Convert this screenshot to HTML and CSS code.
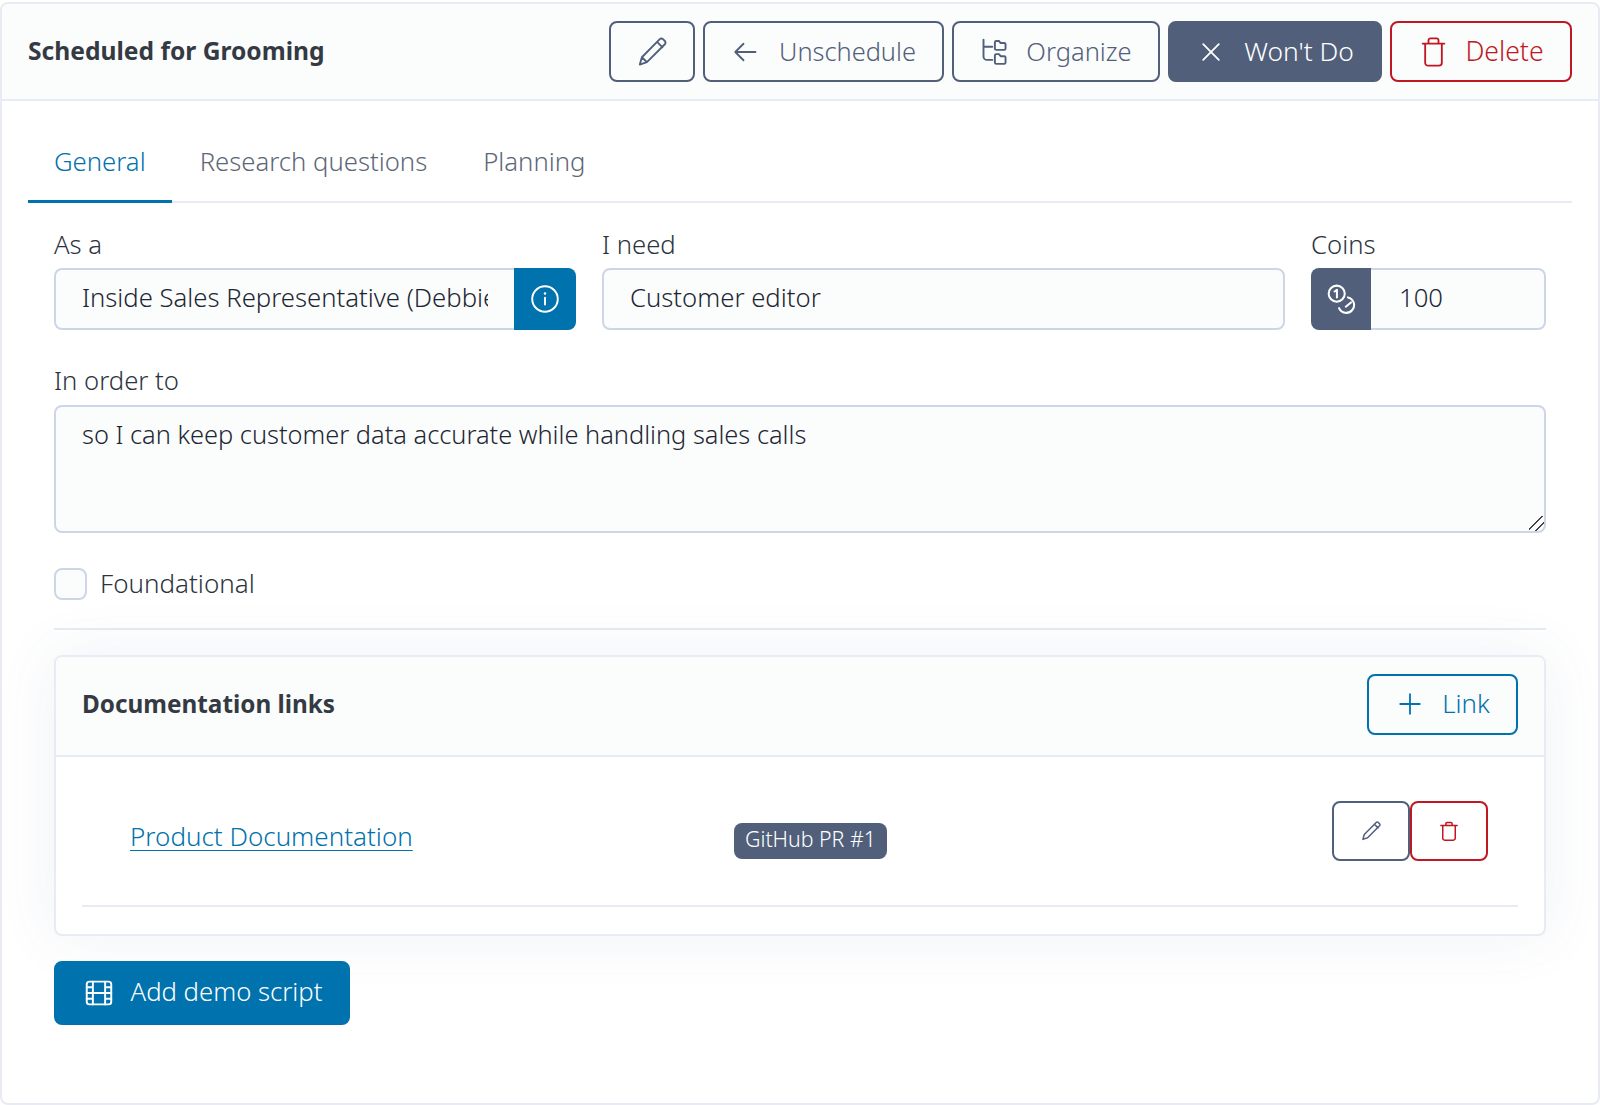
FILE: index.html
```html
<!DOCTYPE html>
<html lang="en">
<head>
<meta charset="utf-8">
<title>Scheduled for Grooming</title>
<link rel="stylesheet" href="styles.css">
</head>
<body>
<main class="panel">
  <header class="panel-head">
    <h1 class="panel-title">Scheduled for Grooming</h1>
    <div class="actions">
      <button class="btn btn-outline btn-icon-only" type="button">
        <svg class="ico ico-pencil" viewBox="0 0 16 16"><path d="M12.150 1.150a1.200 1.200 0 0 1 1.700 0l1 1a1.200 1.200 0 0 1 0 1.700L5.300 13.400 1.500 14.700l1.100-3.900zM10.700 2.600l2.900 2.900M2.600 10.800l2.700 2.600"/></svg>
      </button>
      <button class="btn btn-outline btn-unschedule" type="button">
        <svg class="ico" viewBox="0 0 16 16"><path d="M15 8H1.500M7 2.500 1.500 8 7 13.500"/></svg>
        <span>Unschedule</span>
      </button>
      <button class="btn btn-outline btn-organize" type="button">
        <svg class="ico ico-lg" viewBox="0 0 16 16"><path d="M2 1v9.500A2 2 0 0 0 4 12.500h3M2 5h5M8.500 2.500a.8.800 0 0 1 .8-.8h1.500l1 1.200h2a.8.800 0 0 1 .8.800V6a.8.800 0 0 1-.8.800H9.300a.8.800 0 0 1-.8-.8zM8.500 10a.8.800 0 0 1 .8-.8h1.500l1 1.200h2a.8.800 0 0 1 .8.800V14a.8.800 0 0 1-.8.800H9.300a.8.800 0 0 1-.8-.8z"/></svg>
        <span>Organize</span>
      </button>
      <button class="btn btn-slate btn-wont" type="button">
        <svg class="ico" viewBox="0 0 16 16"><path d="M2.800 2.800l10.400 10.400M13.200 2.800 2.800 13.200"/></svg>
        <span>Won't Do</span>
      </button>
      <button class="btn btn-danger btn-delete" type="button">
        <svg class="ico ico-trash" viewBox="0 0 16 18"><path d="M1.500 4h13M5 4V2a1.200 1.200 0 0 1 1.200-1.200h3.600A1.200 1.200 0 0 1 11 2v2M3 4v11.500A1.700 1.700 0 0 0 4.700 17.200h6.600a1.700 1.700 0 0 0 1.700-1.700V4"/></svg>
        <span>Delete</span>
      </button>
    </div>
  </header>

  <div class="panel-body">
    <nav class="tabs">
      <a class="tab tab-active">General</a>
      <a class="tab">Research questions</a>
      <a class="tab">Planning</a>
    </nav>

    <form class="form">
      <div class="row-top">
        <div class="field field-as">
          <label class="label">As a</label>
          <div class="group">
            <input class="input input-flex" type="text" value="Inside Sales Representative (Debbie)">
            <span class="addon addon-blue addon-right">
              <svg class="ico ico-info" viewBox="0 0 16 16"><circle cx="8" cy="8" r="7.300"/><path d="M8 7.200v4" /><circle class="dot" cx="8" cy="4.800" r=".7"/></svg>
            </span>
          </div>
        </div>
        <div class="field field-need">
          <label class="label">I need</label>
          <input class="input" type="text" value="Customer editor">
        </div>
        <div class="field field-coins">
          <label class="label">Coins</label>
          <div class="group">
            <span class="addon addon-slate addon-left">
              <svg class="ico ico-coins" viewBox="0 0 28 28"><circle cx="10" cy="9" r="7.500"/><path d="M8 7l2.200-1.500V12.500M20.500 12.500a7.300 7.300 0 1 1-8.300 10M23.300 17.200l-4.800 4"/></svg>
            </span>
            <input class="input input-flex input-coins" type="text" value="100">
          </div>
        </div>
      </div>

      <div class="field field-order">
        <label class="label">In order to</label>
        <textarea class="input textarea">so I can keep customer data accurate while handling sales calls</textarea>
      </div>

      <label class="check">
        <input class="checkbox" type="checkbox">
        <span>Foundational</span>
      </label>

      <hr class="rule">

      <section class="docs">
        <div class="docs-head">
          <h2 class="docs-title">Documentation links</h2>
          <button class="btn btn-blue-outline btn-link" type="button">
            <svg class="ico" viewBox="0 0 16 16"><path d="M8 1.500v13M1.500 8h13"/></svg>
            <span>Link</span>
          </button>
        </div>
        <div class="docs-body">
          <div class="doc-row">
            <a class="doc-link" href="#">Product Documentation</a>
            <span class="badge">GitHub PR #1</span>
            <div class="doc-actions">
              <button class="btn btn-outline btn-small" type="button">
                <svg class="ico ico-sm" viewBox="0 0 16 16"><path d="M12.150 1.150a1.200 1.200 0 0 1 1.700 0l1 1a1.200 1.200 0 0 1 0 1.700L5.300 13.400 1.500 14.700l1.100-3.900zM10.700 2.600l2.900 2.900"/></svg>
              </button>
              <button class="btn btn-danger btn-small" type="button">
                <svg class="ico ico-sm" viewBox="0 0 16 16"><path d="M1.500 3.500h13M5.500 3.500V2.200a1 1 0 0 1 1-1h3a1 1 0 0 1 1 1v1.300M3 3.500v10.300a1.500 1.500 0 0 0 1.500 1.500h7a1.500 1.500 0 0 0 1.500-1.500V3.500"/></svg>
              </button>
            </div>
          </div>
        </div>
      </section>

      <button class="btn btn-blue btn-demo" type="button">
        <svg class="ico ico-lg" viewBox="0 0 16 16"><rect x="1" y="1.500" width="14" height="13" rx="1.500"/><path d="M4.500 1.500v13M11.500 1.500v13M4.500 8h7M1 4.700h3.500M1 8h3.500M1 11.300h3.500M11.500 4.700H15M11.500 8H15M11.500 11.300H15"/></svg>
        <span>Add demo script</span>
      </button>
    </form>
  </div>
</main>
</body>
</html>
```

FILE: styles.css
```css
* { box-sizing: border-box; }
html, body { margin: 0; padding: 0; height: 100%; }
body {
  background: #ffffff;
  font-family: "Noto Sans", "Open Sans", sans-serif;
  font-size: 25.7px;
  font-weight: 300;
  color: #2c3440;
  padding-top: 2px;
}
.panel {
  height: 1103px;
  border: 2px solid #e8ebf3;
  border-radius: 8px;
  background: #fff;
  overflow: hidden;
}
.panel-head {
  display: flex;
  align-items: center;
  justify-content: space-between;
  height: 97px;
  padding: 0 26px;
  background: #fbfcfc;
  border-bottom: 2px solid #e8ebf3;
}
.panel-title {
  margin: 0;
  padding-bottom: 3px;
  font-size: 24.6px;
  font-weight: 700;
  color: #343a43;
}
.actions { display: flex; gap: 8px; }
.btn {
  display: inline-flex;
  align-items: center;
  justify-content: center;
  gap: 18px;
  height: 61px;
  padding: 0;
  border: 2px solid #525f7a;
  border-radius: 8px;
  background: transparent;
  font: inherit;
  color: #525f7a;
}
.btn span { margin-bottom: 2px; }
.btn-icon-only { width: 86px; }
.btn-unschedule { width: 241px; gap: 22px; padding-left: 2px; font-size: 25.4px; }
.btn-organize { width: 208px; font-size: 25.5px; }
.btn-wont { width: 214px; gap: 21px; padding-left: 3px; font-size: 26.4px; }
.btn-delete { width: 182px; padding-left: 2px; font-size: 26.6px; }
.btn-outline { color: #525f7a; }
.btn-slate { background: #525f7a; color: #fff; }
.btn-danger { border-color: #c01722; color: #c01722; }
.btn-blue-outline { border-color: #0072ad; color: #0072ad; }
.btn-blue { background: #0072ad; border-color: #0072ad; color: #fff; }
.ico {
  width: 24px;
  height: 24px;
  flex: none;
  fill: none;
  stroke: currentColor;
  stroke-width: 1.2;
  stroke-linecap: round;
  stroke-linejoin: round;
}
.ico-lg { width: 28px; height: 28px; stroke-width: 1.1; }
.ico-pencil { width: 30px; height: 30px; stroke-width: 1; }
.ico-trash { width: 27px; height: 30px; stroke-width: 1.1; }
.ico-sm { width: 20px; height: 20px; stroke-width: 1.2; }
.panel-body { padding: 0 26px; }
.tabs {
  display: flex;
  height: 102px;
  padding-top: 20px;
  border-bottom: 2px solid #e8ebf3;
}
.tab {
  display: flex;
  align-items: center;
  justify-content: center;
  height: 82px;
  padding: 2px 28px 0;
  border-bottom: 3px solid transparent;
  color: #5d6776;
}
.tab-active {
  color: #0072ad;
  border-bottom-color: #0072ad;
  padding: 2px 26px 0;
}
.form { padding: 0 26px; }
.row-top {
  display: grid;
  grid-template-columns: 522px 683px 235px;
  gap: 26px;
  margin-top: 19px;
}
.label {
  display: block;
  line-height: 46px;
  height: 46px;
  color: #2c3440;
}
.input {
  display: block;
  width: 100%;
  height: 62px;
  padding: 0 26px 3px;
  border: 2px solid #ced5e5;
  border-radius: 8px;
  background: #fbfcfc;
  font: inherit;
  font-weight: 350;
  color: #1d2733;
}
.group { display: flex; height: 62px; }
.input-flex { flex: 1; min-width: 0; }
.input-coins { padding-left: 28px; }
.group .input-flex:first-child { border-radius: 8px 0 0 8px; border-right: 0; }
.group .addon + .input-flex { border-radius: 0 8px 8px 0; border-left: 0; }
.addon {
  display: flex;
  align-items: center;
  justify-content: center;
  width: 62px;
  flex: none;
  color: #fff;
}
.addon-blue { background: #0072ad; }
.addon-slate { background: #525f7a; width: 60px; }
.addon-right { border-radius: 0 8px 8px 0; }
.addon-left { border-radius: 8px 0 0 8px; }
.ico-info { width: 28px; height: 28px; stroke-width: 1.1; }
.ico-info .dot { fill: #fff; stroke: none; }
.ico-coins { width: 30px; height: 30px; stroke-width: 1.9; }
.field-order { margin-top: 29px; }
.field-order .label { line-height: 44px; }
.textarea {
  height: 128px;
  padding: 10px 26px;
  font-size: 25.4px;
  line-height: 34px;
  resize: vertical;
}
.textarea::-webkit-resizer {
  background: linear-gradient(135deg, transparent 0 42%, #444 42% 50%, transparent 50% 68%, #444 68% 76%, transparent 76%);
}
.check {
  display: flex;
  align-items: center;
  gap: 13px;
  margin-top: 35px;
  height: 32px;
  font-size: 26px;
  line-height: 32px;
}
.check span { margin-bottom: 2px; }
.checkbox {
  appearance: none;
  width: 33px;
  height: 32px;
  margin: 0;
  border: 2px solid #ced5e5;
  border-radius: 8px;
  background: #fbfcfc;
}
.rule {
  height: 2px;
  margin: 28px 0 25px;
  border: 0;
  background: #e8ebf3;
}
.docs {
  border: 2px solid #e8ebf3;
  border-radius: 8px;
  background: #fff;
  box-shadow: 0 0 60px rgba(80, 95, 140, .09);
}
.docs-head {
  display: flex;
  align-items: center;
  justify-content: space-between;
  height: 100px;
  padding: 0 26px;
  background: #fbfcfc;
  border-bottom: 2px solid #e8ebf3;
  border-radius: 6px 6px 0 0;
}
.docs-title {
  margin: 0;
  padding-bottom: 5px;
  font-size: 24.3px;
  font-weight: 700;
  color: #343a43;
}
.btn-link { width: 151px; margin-bottom: 4px; gap: 20px; padding-left: 3px; font-size: 25.8px; }
.docs-body { padding: 0 26px 27px; }
.doc-row {
  display: grid;
  grid-template-columns: 604px 1fr auto;
  height: 150px;
  padding-left: 48px;
  border-bottom: 2px solid #e8ebf3;
}
.doc-link {
  align-self: center;
  margin-top: 9px;
  font-size: 26px;
  color: #0072ad;
  text-decoration: underline;
  text-underline-offset: 4px;
  text-decoration-thickness: 1px;
}
.badge {
  align-self: start;
  justify-self: start;
  margin-top: 66px;
  height: 36px;
  padding: 0 11px;
  line-height: 31px;
  border-radius: 8px;
  background: #525f7a;
  color: #fff;
  font-size: 21.3px;
}
.doc-actions { display: flex; margin-top: 44px; margin-right: 30px; }
.btn-small { width: 78px; height: 60px; }
.btn-demo {
  width: 296px;
  height: 64px;
  margin-top: 25px;
  padding-left: 3px;
}
.btn-demo span { margin-bottom: 4px; }
```
